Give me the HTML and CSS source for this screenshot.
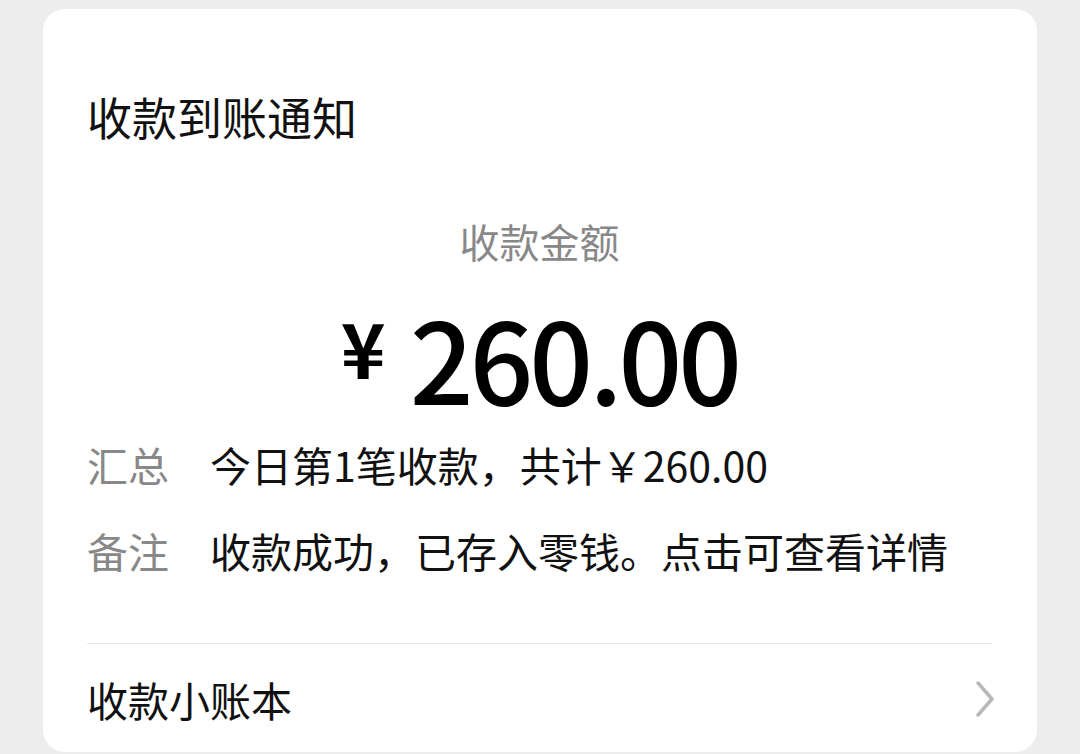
FILE: index.html
```html
<!DOCTYPE html>
<html lang="zh-CN">

<head>
  <meta charset="UTF-8">
  <meta name="viewport" content="width=device-width, initial-scale=1.0">
  <title>收款到账通知</title>
  <link rel="stylesheet" href="styles.css">
</head>

<body>
  <div class="card">
    <div class="card-title">收款到账通知</div>

    <div class="amount-label">收款金额</div>
    <div class="amount">
      <span class="amount-sign">¥</span>
      <span class="amount-value">260.00</span>
    </div>

    <div class="info-row first">
      <div class="info-label">汇总</div>
      <div class="info-value">今日第1笔收款，共计￥260.00</div>
    </div>
    <div class="info-row">
      <div class="info-label">备注</div>
      <div class="info-value">收款成功，已存入零钱。点击可查看详情</div>
    </div>

    <div class="divider"></div>

    <div class="card-footer">
      <span>收款小账本</span>
      <svg class="arrow" width="20" height="36" viewBox="0 0 20 36">
        <path d="M3 2 L17 18 L3 34" fill="none" stroke="#b8b8b8" stroke-width="3.5" stroke-linecap="round" stroke-linejoin="round" />
      </svg>
    </div>
  </div>
</body>

</html>
```

FILE: styles.css
```css
* {
  margin: 0;
  padding: 0;
  box-sizing: border-box;
  font-family: "Noto Sans CJK SC", "Noto Sans", sans-serif;
}

body {
  background-color: #ededed;
  color: #111;
  padding-top: 9px;
  height: 754px;
  overflow: hidden;
}

.card {
  margin: 0 43px;
  height: 743px;
  background-color: #fff;
  border-radius: 22px;
  padding: 78px 45px 23px 44px;
}

.card-title {
  font-size: 45px;
  line-height: 60px;
}

.amount-label {
  margin-top: 64px;
  text-align: center;
  font-size: 40px;
  line-height: 60px;
  color: #888;
}

.amount {
  margin-top: 29px;
  display: flex;
  justify-content: center;
  align-items: flex-start;
  font-family: Roboto, "Liberation Sans", sans-serif;
  font-weight: 500;
  color: #000;
}

.amount-sign {
  font-size: 76px;
  line-height: 76px;
  font-weight: 700;
  margin-top: 8px;
  margin-right: 24px;
}

.amount-value {
  font-size: 112px;
  line-height: 112px;
  letter-spacing: -4px;
}

.info-row {
  display: flex;
  margin-top: 26px;
  font-size: 41px;
  line-height: 60px;
}

.info-row.first {
  margin-top: 22px;
}

.info-label {
  width: 123px;
  color: #888;
}

.divider {
  margin-top: 63px;
  height: 1px;
  background-color: #e5e5e5;
}

.card-footer {
  margin-top: 25px;
  display: flex;
  justify-content: space-between;
  align-items: center;
  font-size: 41px;
  line-height: 60px;
}

.arrow {
  margin-right: -3px;
}
```
